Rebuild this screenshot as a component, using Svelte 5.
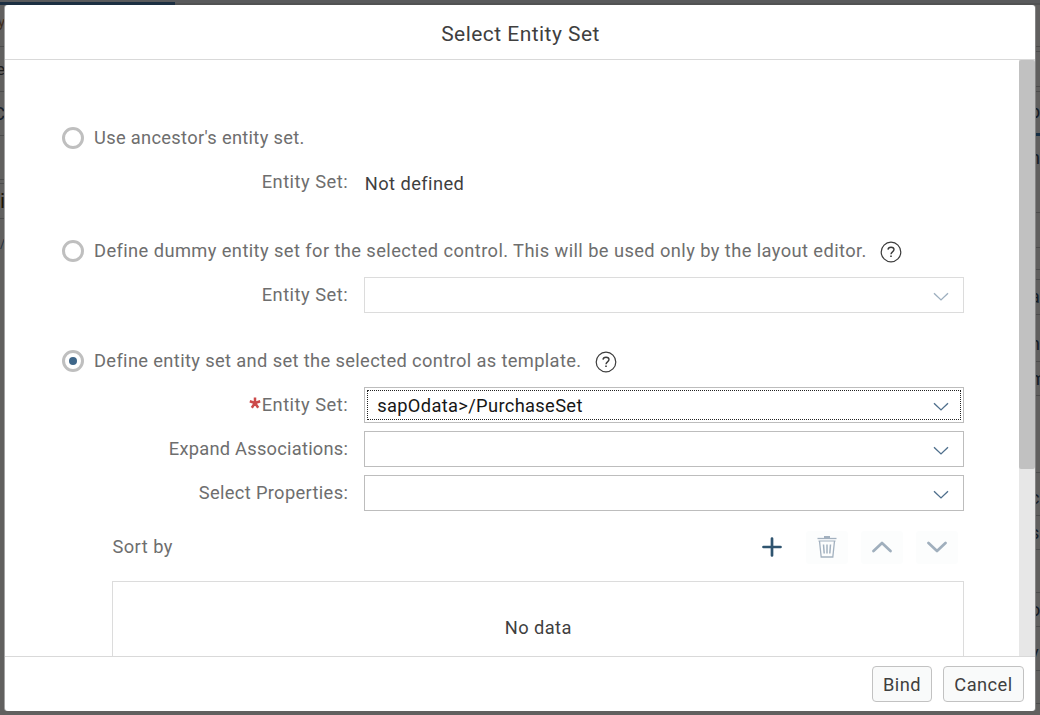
<script>
  const leftRows = [
    { h: 42, t: 'y', c: '#3d2a1c', s: 15, dy: -3 },
    { h: 45, t: 'e', c: '#1d1d1d', s: 17, dy: 0 },
    { h: 44, t: 'C', c: '#16202b', s: 19, dy: 0 },
    { h: 44, t: '', c: '', s: 12, dy: 0 },
    { h: 4, t: '', c: '', s: 2, dy: 0 },
    { h: 35, t: 'i', c: '#1b1408', s: 21, dy: 0 },
    { h: 45, t: '/', c: '#1c2b3c', s: 12, dy: 2, last: true }
  ];
  const rightRows = [
    { h: 42, t: '' },
    { h: 5, t: '' },
    { h: 35, t: '' },
    { h: 5, t: '' },
    { h: 44, t: 'p', blue: true, dy: -1 },
    { h: 77, t: 'n', dy: -16 },
    { h: 35, t: 't', dy: 0 },
    { h: 22, t: '' },
    { h: 10, t: '' },
    { h: 35, t: 'a', dy: 0 },
    { h: 47, t: 'n', dy: 6 },
    { h: 34, t: 'm', dy: 0 },
    { h: 77, t: 't', dy: 20 },
    { h: 43, t: 'c', dy: 4 },
    { h: 34, t: 's', dy: 0 },
    { h: 43, t: '' },
    { h: 34, t: 'o', dy: 0 },
    { h: 44, t: 'v', dy: 4 },
    { h: 33, t: '' }
  ];
</script>

{#snippet help()}
  <svg class="help" width="22" height="22" viewBox="0 0 22 22" fill="none" stroke="#3c3c3c">
    <circle cx="11" cy="11" r="9.8" stroke-width="1.2" />
    <path d="M8 8.6C8.1 7.1 9.3 6.2 11 6.2c1.8 0 3 .9 3 2.4 0 2.3-3 2.2-3 4.6" stroke-width="1.4" />
    <path d="M11 14.4v1.7" stroke-width="1.6" />
  </svg>
{/snippet}

{#snippet arrow()}
  <svg class="arrow" width="16" height="10" viewBox="0 0 16 10" fill="none" stroke="#4f6f8c" stroke-width="1.35">
    <path d="M1 1.2 8 7.9l7-6.7" />
  </svg>
{/snippet}

<div class="screen">
  <div class="shellbar"><div class="progress"></div></div>
  <div class="behind">
    <div class="strip left">
      {#each leftRows as r}
        <div class="slice" class:last={r.last} style="height:{r.h}px">
          <span style="color:{r.c};font-size:{r.s}px;top:{r.dy}px">{r.t}</span>
        </div>
      {/each}
    </div>
    <div class="strip right">
      {#each rightRows as r}
        <div class="slice" class:blue={r.blue} style="height:{r.h}px">
          <span style="top:{r.dy ?? 0}px">{r.t}</span>
        </div>
      {/each}
    </div>
  </div>

  <section class="dialog">
    <header><span class="title">Select Entity Set</span></header>
    <div class="scroll">
      <div class="content">
        <div class="choice">
          <i class="radio"></i><span class="t1">Use ancestor's entity set.</span>
        </div>
        <div class="field">
          <label><span class="tl">Entity Set:</span></label>
          <div class="plain"><span>Not defined</span></div>
        </div>

        <div class="choice second">
          <i class="radio"></i><span class="t2">Define dummy entity set for the selected control. This will be used only by the layout editor.</span>
          {@render help()}
        </div>
        <div class="field">
          <label><span class="tl">Entity Set:</span></label>
          <div class="select disabled">{@render arrow()}</div>
        </div>

        <div class="choice third">
          <i class="radio on"></i><span class="t3">Define entity set and set the selected control as template.</span>
          {@render help()}
        </div>
        <div class="field">
          <label>
            <svg class="star" width="12" height="12" viewBox="0 0 12 12" stroke="#cc4a4a" stroke-width="2.5">
              <path d="M6 .4V6M.8 4.3 6 6M11.2 4.3 6 6M2.8 10.8 6 6M9.2 10.8 6 6" />
            </svg>
            <span class="tl">Entity Set:</span>
          </label>
          <div class="select focused">
            <div class="focus"><span>sapOdata&gt;/PurchaseSet</span></div>
            {@render arrow()}
          </div>
        </div>
        <div class="field">
          <label><span class="ta">Expand Associations:</span></label>
          <div class="select">{@render arrow()}</div>
        </div>
        <div class="field">
          <label><span class="tp">Select Properties:</span></label>
          <div class="select">{@render arrow()}</div>
        </div>

        <div class="toolbar">
          <span class="sort">Sort by</span>
          <button class="tool add" aria-label="Add">
            <svg width="20" height="20" viewBox="0 0 20 20" stroke="#2f546f" stroke-width="2.7" stroke-linecap="round">
              <path d="M10 1.5v17M1.5 10h17" />
            </svg>
          </button>
          <button class="tool" aria-label="Delete">
            <svg width="20" height="22" viewBox="0 0 20 22" fill="none" stroke="#a3b1bf">
              <path d="M7 1h6" stroke-width="2" />
              <path d="M.5 2.5h19" stroke-width="1.3" />
              <path d="M1.5 5h17" stroke-width="1" />
              <path d="M2.5 5 4.2 21h11.6L17.5 5" stroke-width="1.3" />
              <path d="M6.5 8.5l.7 9M10 8.5v9M13.5 8.5l-.7 9" stroke-width="1.5" />
            </svg>
          </button>
          <button class="tool" aria-label="Move up">
            <svg width="20" height="12" viewBox="0 0 20 12" fill="none" stroke="#a0afbd" stroke-width="2.7" stroke-linecap="round" stroke-linejoin="round">
              <path d="M1.5 10 10 2l8.5 8" />
            </svg>
          </button>
          <button class="tool" aria-label="Move down">
            <svg width="20" height="12" viewBox="0 0 20 12" fill="none" stroke="#a0afbd" stroke-width="2.7" stroke-linecap="round" stroke-linejoin="round">
              <path d="M1.5 2 10 10l8.5-8" />
            </svg>
          </button>
        </div>
        <div class="table"><span>No data</span></div>
      </div>
      <div class="track"><div class="thumb"></div></div>
    </div>
    <footer>
      <button class="btn bind"><span>Bind</span></button>
      <button class="btn cancel"><span>Cancel</span></button>
    </footer>
  </section>
</div>

<style>
  :global(body) { margin: 0; }
  * { box-sizing: border-box; }
  .screen {
    position: relative;
    width: 1040px;
    height: 715px;
    overflow: hidden;
    background: #61605f;
    font-family: Roboto, 'Liberation Sans', sans-serif;
    font-size: 18.3px;
    letter-spacing: 0.41px;
    color: #6e6e6e;
    white-space: nowrap;
  }
  .shellbar { height: 5px; background: #595a5c; border-bottom: 2px solid #515253; display: flex; align-items: flex-end; }
  .progress { width: 175px; height: 3px; margin-bottom: -2px; background: #1c2f42; }
  .behind { height: 710px; display: flex; justify-content: space-between; }
  .strip { width: 5px; overflow: hidden; }
  .slice { display: flex; align-items: center; justify-content: flex-end; overflow: hidden; border-bottom: 1px solid #4c4c4c; }
  .slice span { position: relative; line-height: 1; letter-spacing: 0; }
  .slice.last { border: 0; }
  .right .slice { justify-content: flex-start; color: #151b25; font-size: 18px; }
  .right .slice span { margin-left: -5px; }
  .right .slice.blue { border-bottom: 3px solid #172f44; }
  .dialog {
    position: absolute;
    left: 5px;
    top: 5px;
    width: 1030px;
    height: 706px;
    display: flex;
    flex-direction: column;
    overflow: hidden;
    background: #fff;
    border-radius: 3px;
    box-shadow: -1px 0 0 #a4a4a4, 1px 0 0 #858585;
  }
  header { height: 55px; flex: none; display: flex; align-items: center; justify-content: center; border-bottom: 1px solid #d9d9d9; color: #3f3f3f; font-size: 21px; padding: 3px 0 0 1px; }
  .title { letter-spacing: 0.46px; }
  .scroll { flex: 1; min-height: 0; display: flex; overflow: hidden; }
  .content { flex: 1; padding: 60px 54.8px 0 57.2px; overflow: hidden; }
  .track { width: 16px; background: #e7e7e7; }
  .thumb { height: 409px; background: #c1c1c1; border-radius: 2px; }
  .choice { height: 36px; display: flex; align-items: center; }
  .choice span, label span, .sort { position: relative; top: -1px; }
  .t1 { letter-spacing: 0.31px; }
  .t3 { letter-spacing: 0.36px; }
  .second { margin-top: 33px; }
  .third { margin-top: 30px; }
  .radio { width: 22px; height: 22px; flex: none; border: 3px solid #bfbfbf; border-radius: 50%; margin-right: 9.8px; display: flex; align-items: center; justify-content: center; }
  .on::after { content: ''; width: 8px; height: 8px; border-radius: 50%; background: #3e6689; }
  .help { margin: 2px 0 0 13px; }
  .field { height: 36px; margin-top: 8px; display: flex; }
  label { width: 286px; margin-right: 16px; display: flex; align-items: center; justify-content: flex-end; }
  .tl { letter-spacing: 0.5px; }
  .ta { letter-spacing: 0.24px; }
  .tp { letter-spacing: 0.34px; }
  .star { margin: -4px 1px 0 0; }
  .plain { display: flex; align-items: center; color: #3f3f3f; padding: 2px 0 0 .6px; letter-spacing: 0.42px; }
  .select { position: relative; flex: 1; border: 1px solid #bdbdbd; display: flex; align-items: center; justify-content: flex-end; padding: 3px 14.2px 0 0; }
  .disabled { border-color: #dcdcdc; }
  .disabled .arrow { opacity: .55; }
  .focused { padding: 2px; color: #161616; }
  .focused .arrow { position: absolute; right: 14.2px; top: 13.5px; }
  .focus { flex: 1; height: 30px; border: 1px dotted #222; display: flex; align-items: center; padding-left: 9px; letter-spacing: 0.34px; }
  .toolbar { margin: 18px 0 0 50.2px; height: 36px; padding-right: 6px; display: flex; align-items: center; gap: 13px; }
  .sort { margin-right: auto; letter-spacing: 0.48px; }
  .tool { width: 42px; height: 33px; padding: 0; border: 0; border-radius: 3px; background: #fcfdfd; display: flex; align-items: center; justify-content: center; }
  .add { background: none; }
  .table { height: 93px; margin: 16px 0 0 50.2px; border: 1px solid #dcdcdc; display: flex; align-items: center; justify-content: center; color: #3f3f3f; }
  footer { height: 55px; flex: none; border-top: 1px solid #d9d9d9; display: flex; align-items: center; justify-content: flex-end; gap: 11px; padding-right: 11px; }
  .btn { height: 36px; padding: 0; border: 1px solid #c2c2c2; border-radius: 4px; background: #f9fafa; font: inherit; letter-spacing: 0.45px; color: #3f3f3f; }
  .bind { width: 60px; }
  .cancel { width: 81px; }
</style>
